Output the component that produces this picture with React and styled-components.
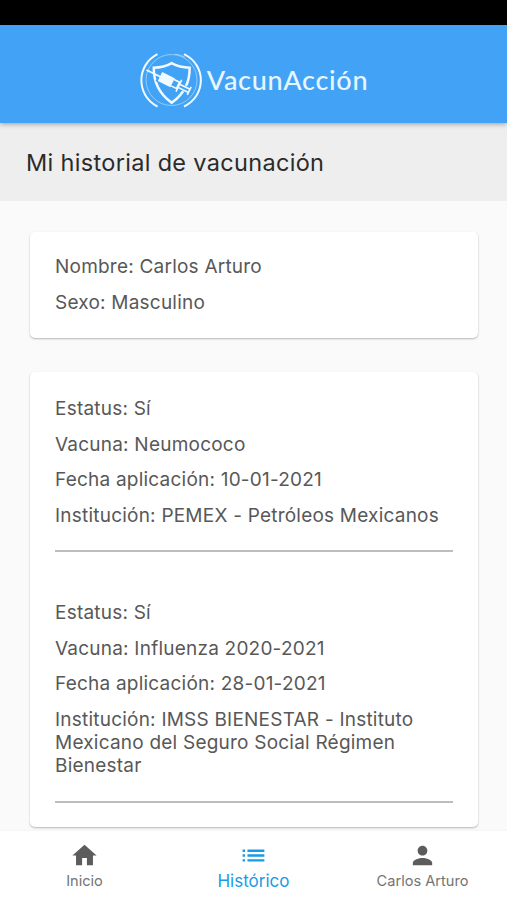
import React, { useState } from "react";
import styled, { createGlobalStyle } from "styled-components";
import { MdHome, MdList, MdPerson } from "react-icons/md";

const records = [
  {
    status: "Sí",
    vaccine: "Neumococo",
    date: "10-01-2021",
    institution: "PEMEX - Petróleos Mexicanos",
  },
  {
    status: "Sí",
    vaccine: "Influenza 2020-2021",
    date: "28-01-2021",
    institution:
      "IMSS BIENESTAR - Instituto Mexicano del Seguro Social Régimen Bienestar",
  },
];

const tabs = [
  { id: "home", label: "Inicio", Icon: MdHome },
  { id: "history", label: "Histórico", Icon: MdList },
  { id: "profile", label: "Carlos Arturo", Icon: MdPerson },
];

const Logo = () => (
  <LogoIcon viewBox="0 0 64 60" fill="none" stroke="#f0faff">
    <circle cx="32.5" cy="30" r="25.5" strokeWidth="0.9" opacity="0.5" />
    <path d="M18.5 4.2C-3 15-3 45.5 18.5 56.5" strokeWidth="2" />
    <path d="M45 4.2C67.5 15 67.5 45.5 45 56.5" strokeWidth="2" />
    <path d="M36 4.200C39.500 4.600 43 5.500 46 7.200" strokeWidth="0.9" opacity="0.5" />
    <path
      d="M32.7 13.2C27 16.5 21 17.7 14.8 17.7C14.5 32 20 43.5 32.7 52.8C45.5 43.5 51 32 50.6 17.7C44.5 17.7 38.5 16.5 32.7 13.2Z"
      strokeWidth="2.5"
    />
    <g transform="translate(7.5 20) rotate(26)">
      <path d="M13 -6H30V6H13Z" fill="#42a3f6" stroke="none" />
      <path d="M30 -3H48V3H30Z" fill="#42a3f6" stroke="none" />
      <path d="M0 0H16" strokeWidth="1.9" />
      <path d="M15 -5H29V5H15Z" fill="#f0faff" stroke="none" />
      <path
        d="M29 -3.5H35V3.5H29M36 -6.5V6.5M36 -1.8H47M36 1.8H47M47.5 -4.5V4.5"
        strokeWidth="1.6"
      />
    </g>
  </LogoIcon>
);

const App = () => {
  const [activeTab, setActiveTab] = useState("history");

  return (
    <Screen>
      <GlobalStyle />
      <StatusBar />
      <Header>
        <Logo />
        <Brand>VacunAcción</Brand>
      </Header>
      <TitleBar>
        <Title>Mi historial de vacunación</Title>
      </TitleBar>
      <Content>
        <Card>
          <Line>Nombre: Carlos Arturo</Line>
          <Line>Sexo: Masculino</Line>
        </Card>
        <Card $list>
          {records.map((record) => (
            <Record key={record.date}>
              <Line>{`Estatus: ${record.status}`}</Line>
              <Line>{`Vacuna: ${record.vaccine}`}</Line>
              <Line>{`Fecha aplicación: ${record.date}`}</Line>
              <Line>{`Institución: ${record.institution}`}</Line>
              <Divider />
            </Record>
          ))}
        </Card>
      </Content>
      <BottomNav>
        {tabs.map(({ id, label, Icon }) => (
          <Tab
            key={id}
            $active={id === activeTab}
            onClick={() => setActiveTab(id)}
          >
            <Icon size={29} />
            <TabLabel $active={id === activeTab}>{label}</TabLabel>
          </Tab>
        ))}
      </BottomNav>
    </Screen>
  );
};

export default App;

const GlobalStyle = createGlobalStyle`
  * {
    box-sizing: border-box;
  }

  body {
    margin: 0;
    font-family: Inter, "Liberation Sans", sans-serif;
  }
`;

const Screen = styled.div`
  display: flex;
  flex-direction: column;
  height: 100vh;
  overflow: hidden;
  background-color: #fafafa;
`;

const StatusBar = styled.div`
  flex: none;
  height: 25px;
  background-color: #000000;
`;

const Header = styled.header`
  flex: none;
  display: flex;
  align-items: center;
  justify-content: center;
  gap: 4px;
  height: 98px;
  padding-top: 12px;
  background-color: #42a3f6;
  box-shadow: 0 1px 5px rgba(0, 0, 0, 0.35);
  z-index: 1;
`;

const LogoIcon = styled.svg`
  width: 64px;
  height: 60px;
`;

const Brand = styled.div`
  padding-bottom: 2px;
  font-family: Lato, sans-serif;
  font-size: 27px;
  font-weight: 500;
  letter-spacing: 0.7px;
  color: #e8f7ff;
`;

const TitleBar = styled.div`
  flex: none;
  display: flex;
  align-items: center;
  height: 78px;
  padding: 1px 26px 0;
  background-color: #eeeeee;
`;

const Title = styled.h1`
  margin: 0;
  font-size: 23.5px;
  font-weight: 400;
  letter-spacing: 0.32px;
  color: #2b2b2b;
`;

const Content = styled.main`
  flex: 1;
  min-height: 0;
  overflow: hidden;
  display: flex;
  flex-direction: column;
  gap: 34px;
  padding: 31px 29px 0 30px;
`;

const Card = styled.section`
  flex: none;
  display: flex;
  flex-direction: column;
  gap: ${(props) => (props.$list ? "48.8px" : "12.2px")};
  padding: ${(props) => (props.$list ? "25.4px 25px 24px" : "23.2px 25px 23.8px")};
  border-radius: 5px;
  background-color: #ffffff;
  box-shadow: 0 1px 2px rgba(0, 0, 0, 0.28);
`;

const Record = styled.div`
  display: flex;
  flex-direction: column;
  gap: 12.2px;
`;

const Line = styled.p`
  margin: 0;
  font-size: 19px;
  line-height: 23.3px;
  letter-spacing: 0.22px;
  color: #585858;
`;

const Divider = styled.div`
  height: 2px;
  margin-top: 11.2px;
  background-color: #bdbdbd;
`;

const BottomNav = styled.nav`
  flex: none;
  display: grid;
  grid-template-columns: repeat(3, 1fr);
  height: 69px;
  background-color: #ffffff;
  box-shadow: 0 0 2px rgba(0, 0, 0, 0.06);
  z-index: 1;
`;

const Tab = styled.button`
  display: flex;
  flex-direction: column;
  align-items: center;
  padding: 10px 0 0;
  border: none;
  background: none;
  font-family: inherit;
  color: ${(props) => (props.$active ? "#1a9be6" : "#5c5c5c")};
  cursor: pointer;
`;

const TabLabel = styled.span`
  font-size: ${(props) => (props.$active ? "17px" : "14.6px")};
  line-height: 20px;
  margin-top: 1px;
  color: ${(props) => (props.$active ? "#1a9be6" : "#747474")};
`;
